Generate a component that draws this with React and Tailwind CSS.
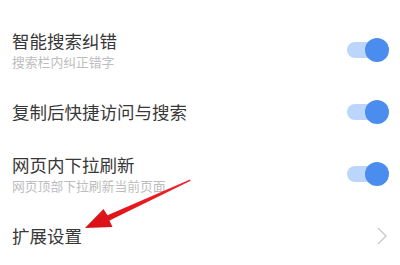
import React from 'react';

const rows = [
  { title: '智能搜索纠错', sub: '搜索栏内纠正错字', toggle: true },
  { title: '复制后快捷访问与搜索', toggle: true },
  { title: '网页内下拉刷新', sub: '网页顶部下拉刷新当前页面', toggle: true },
  { title: '扩展设置', chevron: true },
];

function Toggle() {
  return (
    <div className="relative w-[42px] h-[24px] shrink-0">
      <div className="absolute left-0 top-[4px] w-[34px] h-[16px] rounded-full bg-[#bcd5fb]" />
      <div className="absolute right-0 top-0 w-[24px] h-[24px] rounded-full bg-[#4a8def]" />
    </div>
  );
}

function Chevron() {
  return (
    <svg width="12" height="20" viewBox="0 0 12 20" className="shrink-0 mr-[1px]">
      <path d="M2 2 L10 10 L2 18" fill="none" stroke="#c9c9c9" strokeWidth="1.4" />
    </svg>
  );
}

export default function App() {
  return (
    <div
      className="relative w-[400px] h-[265px] overflow-hidden bg-white pt-[19px]"
      style={{ fontFamily: '"Noto Sans CJK SC", "Noto Sans", sans-serif' }}
    >
      {rows.map((r, i) => (
        <div key={i} className="h-[62px] flex items-center justify-between pl-[12px] pr-[11px]">
          <div className="flex flex-col gap-[2px]">
            <div className="text-[17.5px] leading-[22px] text-[#383838]">{r.title}</div>
            {r.sub && <div className="text-[12.8px] leading-[16px] text-[#bdbdbd]">{r.sub}</div>}
          </div>
          {r.toggle && <Toggle />}
          {r.chevron && <Chevron />}
        </div>
      ))}

      <svg className="absolute left-0 top-0" width="400" height="265" viewBox="0 0 400 265">
        <defs>
          <linearGradient id="ar" x1="0" y1="1" x2="1" y2="0">
            <stop offset="0" stopColor="#d90f16" />
            <stop offset="1" stopColor="#f0262b" />
          </linearGradient>
        </defs>
        <polygon
          points="85,228 103.5,209 107.5,215.2 190,179.4 190.7,180.7 109.5,220.6 112.5,227"
          fill="url(#ar)"
        />
      </svg>
    </div>
  );
}
